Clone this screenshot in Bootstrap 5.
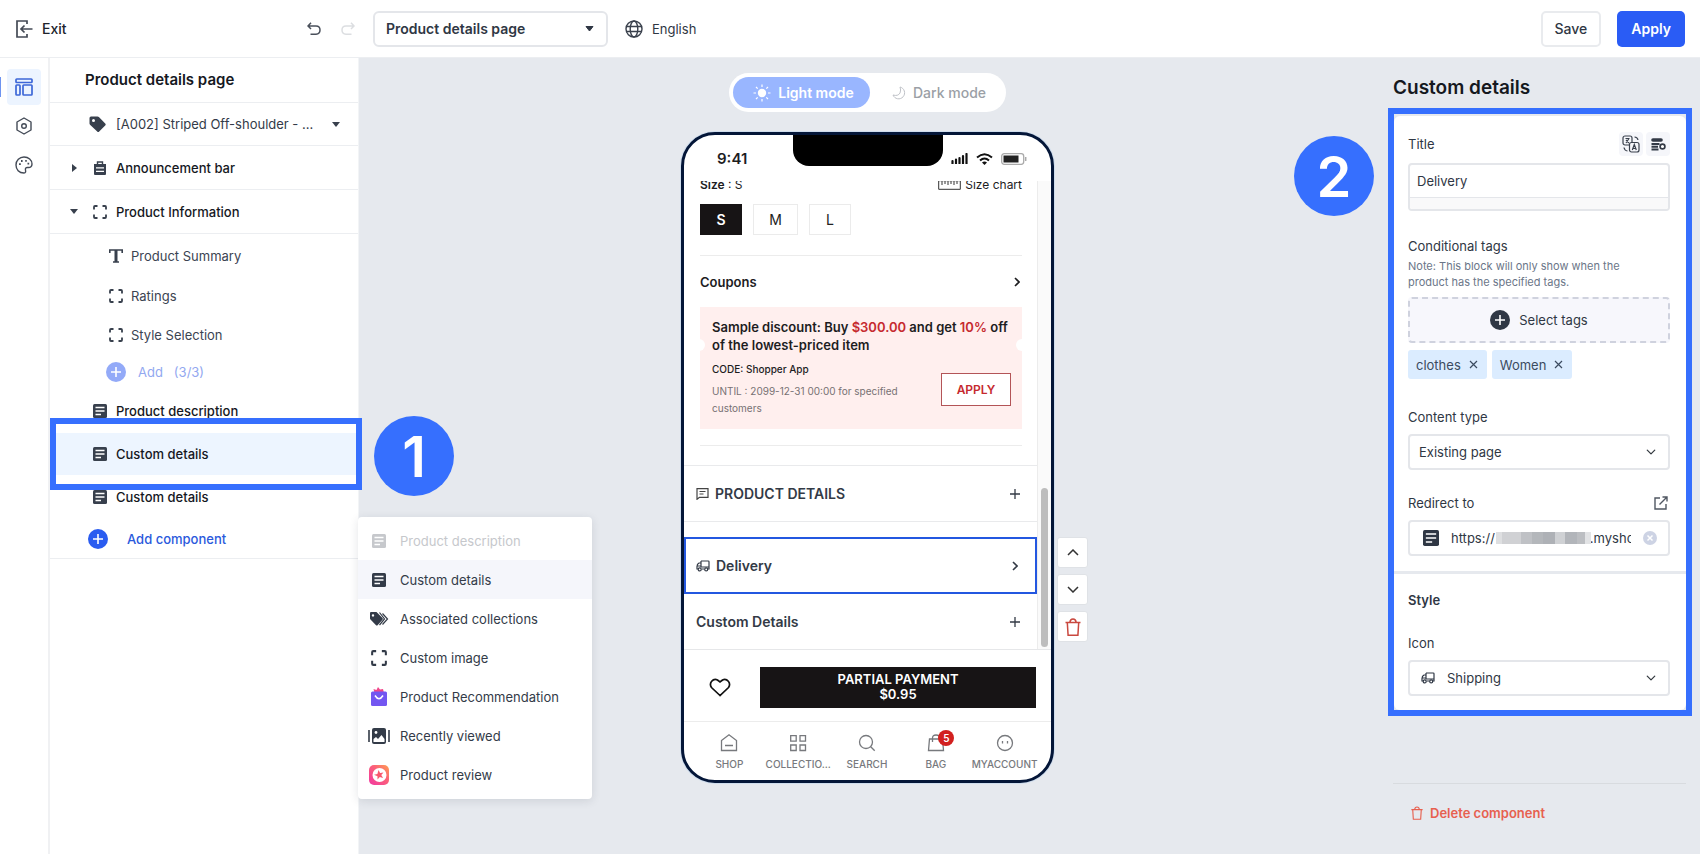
<!DOCTYPE html>
<html lang="en">
<head>
<meta charset="utf-8">
<meta name="viewport" content="width=device-width, initial-scale=1">
<title>Product details page</title>
<link href="https://cdn.jsdelivr.net/npm/bootstrap@5.3.0/dist/css/bootstrap.min.css" rel="stylesheet">
<style>
:root{--ink:#2f3744;--dark:#15181e;--line:#eceef1;--blue:#2a5cf5;--mark:#366ffe;--canvas:#e6e9ee}
body{font-family:Inter,"Liberation Sans",sans-serif;font-size:13px;line-height:18px;color:var(--ink);background:var(--canvas)}
button{font:inherit;color:inherit}
svg{display:block;flex:none}
.plain{background:none;border:0;padding:0;text-align:left}
.fw-medium{font-weight:500}
.fw-semi{font-weight:600}
/* top bar */
.topbar{height:58px;background:#fff;border-bottom:1px solid var(--line)}
.exit{gap:9px;width:291px;color:#20242c;font-size:14px}
.page-picker{width:235px;height:36px;margin-left:18px;border:2px solid #e4e6ea;border-radius:6px;font-size:14px;font-weight:600;color:var(--ink);padding:0 11px;background-size:9px 6px;background-position:right 12px center;background-image:url("data:image/svg+xml,%3Csvg xmlns='http://www.w3.org/2000/svg' viewBox='0 0 9 6'%3E%3Cpath d='M1 .5h7L4.500 5z' fill='%232f3744' stroke='%232f3744' stroke-linejoin='round'/%3E%3C/svg%3E")}
.lang{gap:9px;margin-left:17px}
.top-actions{padding-right:15px}
.top-btn{height:36px;border-radius:5px;font-size:14px;line-height:18px;padding:0 12px}
.btn-save{background:#fff;border:2px solid #e9ebee;font-weight:500}
.btn-save,.btn-save:hover{color:var(--ink)}
.btn-apply{background:var(--blue);color:#fff;font-weight:600;border:0;padding:0 14px}
/* left side */
.rail{width:50px;background:#fff;border-right:2px solid #f0f1f3;padding-top:11px;gap:3px}
.rail-btn{width:34px;height:36px;border-radius:4px;display:flex;align-items:center;justify-content:center}
.rail-btn.on{background:#ecf4ff;color:#3d67d8}
.rail-cell{width:100%;padding-left:7px}
.rail-cell .tick-bar{position:absolute;left:0;top:8px;width:1px;height:20px;background:#6d93f0}
.tree{width:309px;background:#fff;border-right:1px solid #f2f4f6;color:var(--dark)}
.tree h2{height:45px;font-size:15px;padding-left:35px;border-bottom:1px solid var(--line)}
.tree-row{display:flex;align-items:center;width:100%;height:44px;gap:9px;padding-left:43px;position:relative}
.tree-row.lined{border-bottom:1px solid var(--line)}
.tree-row.item{height:43px;padding-left:39px;gap:10px}
.tree-row.item span{width:202px;color:#333b48}
.tree-row .twist{position:absolute;left:20px}
.tree-row svg{color:#38404d}
.tree-row.sub{padding-left:59px;gap:8px;color:#3b4452}
.tree-row.mid{height:36px}
.tree-row.tall{height:41px}
.tree-row.more{height:34px;padding-left:56px;gap:12px;color:#93a8f0}
.tree-row.more svg{color:#93aaf8}
.tree-row.picked{background:#edf5ff;height:42px}
.tree-row.adder{height:39px;padding-left:38px;gap:19px;color:#2a59dc}
.tree-row.adder svg{color:#2a5cf0}
.tree-end{border-bottom:1px solid var(--line)}
.mark-row{position:absolute;left:0;top:-15px;width:312px;height:72px;border:6px solid var(--mark);z-index:3}
.step-dot{width:80px;height:80px;border-radius:50%;background:var(--mark);color:#fff;font-size:56px;font-weight:600;line-height:82px;text-align:center;position:absolute;z-index:4}
.step-one{left:324px;top:-17px}
.step-two{right:326px;top:78px}
.comp-menu{position:absolute;left:308px;top:-2px;width:234px;background:#fff;border-radius:4px;box-shadow:0 2px 10px rgba(30,40,60,.12);padding:4px 0 5px;z-index:5;color:#333b48}
.comp-menu button{display:flex;align-items:center;gap:9px;height:39px;width:100%;padding-left:9px}
.comp-menu .pic{width:24px;display:flex;justify-content:center}
.comp-menu .hot{background:#f5f6fb}
.comp-menu button:disabled{color:#c6c8cc}
/* preview */
.mode-pill{height:39px;border-radius:20px;background:#fff;padding:4px;width:277px;margin-top:15px;font-size:14px;color:#9b9fa6}
.mode-pill button{border-radius:16px;gap:7px}
.mode-pill .on{background:#99b6ff;color:#fff;width:137px;padding-left:4px}
.mode-pill .off{padding-left:22px}
.phone{width:373px;margin-top:20px;border:3px solid #041638;border-radius:34px;background:#fff;box-shadow:0 0 0 1px #cfdded;color:#1d1d1f}
.phone-clip{border-radius:31px;overflow:hidden}
.statusbar{height:46px;padding:1px 24px 0 33px}
.clock{font-size:15px;font-weight:600;line-height:18px}
.notch{position:absolute;left:109px;top:0;width:150px;height:31px;background:#000;border-radius:0 0 16px 16px}
.scroller{overflow:hidden;border-bottom:1px solid #e6e7e9}
.track{width:14px;background:#fafafa;border-left:1px solid #ececec;padding:0 2px 2px 3px}
.thumb{width:7px;height:159px;border-radius:4px;background:#bdbdbd}
.pad{padding:0 15px 0 16px}
.size-line{margin-top:-5px;font-size:12px;line-height:18px}
.sizes{margin:10px 0 20px;gap:11px}
.size-box{width:42px;height:31px;background:#fff;border:1px solid #ebebeb;font-size:14px;color:#222;text-align:center}
.size-box.wide{width:45px}
.size-box.on{background:#171415;color:#fff;border-color:#171415;font-weight:600}
.rule{height:1px;background:#ececec}
.coupons{height:51px;font-weight:600;width:100%;padding-right:2px}
.coupon{background:#ffefee;height:122px;padding:11px 11px 0 12px;position:relative}
.coupon:before,.coupon:after{content:"";position:absolute;top:32px;width:12px;height:12px;border-radius:50%;background:#fff}
.coupon:before{left:-7px}.coupon:after{right:-6px}
.coupon h3{font-size:13px;line-height:18px;font-weight:600;margin:0;white-space:nowrap}
.red{color:#c62a2f}
.tiny{font-size:10px;line-height:17px;padding-top:7px}
.until{color:#777173;margin-top:5px}
.btn-coupon{width:70px;height:33px;margin-top:19px;border:1px solid #b35457;background:#fff;color:#c62a2f;font-size:12px;font-weight:600;text-align:center;flex:none}
.fold{display:flex;align-items:center;gap:6px;width:100%;font-size:14px;font-weight:600;color:#333a46;padding:0 17px 0 12px}
.fold.ruled{height:57px;border-top:1px solid #e9eaec;border-bottom:1px solid #e9eaec;margin-top:19px}
.fold.chosen{height:57px;border:2px solid #2357e0;padding:0 17px 0 10px;margin-top:15px}
.fold.last{height:55px}
.buybar{height:72px;border-bottom:1px solid #ececec;padding:3px 15px 0 25px}
.buy{width:276px;height:41px;background:#171415;color:#fff;font-weight:600;line-height:15px;text-align:center}
.tabs{padding:11px 12px 0 11px;height:58px}
.tabs a{width:69px;color:#77797d;font-size:10px;line-height:14px;text-decoration:none;display:flex;flex-direction:column;align-items:center;gap:4px;position:relative;font-weight:500;white-space:nowrap}
.count{position:absolute;left:37px;top:-3px;width:16px;height:16px;border-radius:50%;background:#d2201f;color:#fff;font-size:10px;line-height:16px;text-align:center;font-weight:600}
.side-tools{position:absolute;left:373px;top:402px;display:flex;flex-direction:column;gap:6px}
.side-tools button{width:31px;height:31px;background:#fff;border:1px solid #dfe2e6;border-radius:3px;display:flex;align-items:center;justify-content:center}
.bin{color:#c9483f}
/* inspector */
.inspector{width:324px;padding:0 8px 0 12px}
.inspector h1{font-size:19px;line-height:24px;font-weight:600;margin:18px 5px 8px;color:var(--dark)}
.boxed{border:6px solid var(--mark);background:var(--canvas);padding-top:2px}
.sheet{background:#fff;padding:0 16px 0 14px}
.sheet.top{border-radius:6px 6px 0 0;height:455px;padding-top:15px}
.sheet.bottom{margin-top:3px;border-radius:0 0 6px 6px;height:136px;padding-top:17px}
.field{border:2px solid #e4e6ea;border-radius:4px;height:36px;background-color:#fff;font-size:13px;line-height:18px;color:var(--ink)}
.sheet .form-select{padding:0 34px 0 9px;background-size:12px 10px;background-position:right 11px center}
.sheet input{border:0;background:none;font-size:13px;color:var(--ink);padding:0;min-width:0}
.gap-3px{gap:3px}
.mini{width:24px;height:24px;border-radius:4px;background:#f5f6fa;display:flex;align-items:center;justify-content:center}
.title-field{height:48px;overflow:hidden;margin:6px 0 26px}
.title-field input{height:32px;padding-left:7px;display:block;width:100%}
.strip{height:13px;background:#f9f9fa;border-top:1px solid #e4e6ea}
.note{font-size:11px;line-height:16px;color:#6b7688;margin:3px 0 7px;padding-right:32px}
.drop-tags{height:46px;border:2px dashed #cfd2de;border-radius:4px;background:#f7f7fc;width:100%;gap:9px}
.chips{margin-top:7px;gap:5px}
.chip{height:29px;background:#dbecff;border-radius:3px;padding:0 9px 0 8px;gap:8px;color:#3b4b60}
.lbl{margin:29px 0 8px}
.lbl-row{margin:24px 2px 8px 0}
.lbl-icon{margin:25px 0 8px}
.url-field{padding:0 11px 0 13px}
.url-field input{width:180px;margin-left:12px}
.mosaic{position:absolute;left:86px;top:10px;width:95px;height:12px;background:linear-gradient(90deg,#dedfe1 0 6%,#d0d1d4 6% 26%,#bfc1c5 26% 38%,#b4b7bb 38% 50%,#aeb1b6 50% 62%,#cfd1d4 62% 73%,#b2b5ba 73% 85%,#bcbec2 85% 94%,#e2e3e5 94%)}
.ship{position:absolute;left:13px;top:12px}
.sheet .with-icon{padding-left:37px}
.delete{border-top:1px solid #d8dbdf;margin:67px 6px 0 5px;padding:20px 0 0 18px}
.delete button{color:#e7604f;font-weight:600;gap:7px}
</style>
</head>
<body>
<svg width="0" height="0" class="position-absolute" aria-hidden="true">
  <symbol id="i-doc" viewBox="0 0 14 14"><rect width="14" height="14" rx="1.500" fill="currentColor"/><path d="M2.500 3.500h9M2.500 7h9M2.500 10.500h5.500" stroke="#fff" stroke-width="1.300"/></symbol>
  <symbol id="i-frame" viewBox="0 0 14 14"><path d="M1 4.500V2q0-1 1-1h2.500M9.500 1H12q1 0 1 1v2.500M13 9.500V12q0 1-1 1H9.500M4.500 13H2q-1 0-1-1V9.500" fill="none" stroke="currentColor" stroke-width="1.800"/></symbol>
  <symbol id="i-plus-dot" viewBox="0 0 20 20"><circle cx="10" cy="10" r="10" fill="currentColor"/><path d="M10 5v10M5 10h10" stroke="#fff" stroke-width="1.600"/></symbol>
  <symbol id="i-tag" viewBox="0 0 17 17"><path fill="currentColor" fill-rule="evenodd" d="M2 .5h6.500q.8 0 1.400.6l6.300 6.500q1 1 0 2l-6 6q-1 1-2 0L1.300 9Q.5 8.300.5 7.500V2Q.5.500 2 .5zM4.500 2.900a1.500 1.500 0 1 0 0 3 1.500 1.500 0 0 0 0-3z"/></symbol>
  <symbol id="i-truck" viewBox="0 0 14 12"><path d="M5 1h7.200q.8 0 .8.8v7.200h-1M8.500 9H5.500M5 1v6h8M5 3H3Q1 4 1 6.500V9h1M1 6h4" fill="none" stroke="currentColor" stroke-width="1.200"/><circle cx="3.700" cy="9.400" r="1.500" fill="#fff" stroke="currentColor" stroke-width="1.200"/><circle cx="10.200" cy="9.400" r="1.500" fill="#fff" stroke="currentColor" stroke-width="1.200"/></symbol>
  <symbol id="i-plus" viewBox="0 0 10 10"><path d="M5 0v10M0 5h10" stroke="currentColor" stroke-width="1.300"/></symbol>
  <symbol id="i-right" viewBox="0 0 6 10"><path d="M1 1l4 4-4 4" fill="none" stroke="currentColor" stroke-width="1.600"/></symbol>
  <symbol id="i-bin" viewBox="0 0 16 18"><path d="M.5 4.500h15M2.300 4.500l.8 12.800h9.800l.8-12.800M4.800 4.500Q5.300 1 8 1t3.200 3.500" fill="none" stroke="currentColor" stroke-width="1.500"/></symbol>
  <symbol id="i-x" viewBox="0 0 9 9"><path d="M1 1l7 7M8 1L1 8" stroke="currentColor" stroke-width="1.200"/></symbol>
</svg>

<div class="d-flex flex-column min-vh-100">
  <header class="topbar d-flex align-items-center">
    <button class="plain exit d-flex align-items-center fw-medium ms-3">
      <svg width="17" height="18" viewBox="0 0 17 18" fill="none" stroke="#444a55" stroke-width="1.700"><path d="M11 4V1H1v16h10v-3M16.500 9H5M8.500 5.500L5 9l3.500 3.500"/></svg>
      <span>Exit</span>
    </button>
    <button class="plain" aria-label="Undo"><svg width="14" height="14" viewBox="0 0 14 14" fill="none" stroke="#4a505b" stroke-width="1.500"><path d="M1 4h8q4 0 4 4t-4 4.300H3.500M4 .8L1 4l3 3"/></svg></button>
    <button class="plain ms-3 ps-1" aria-label="Redo" disabled><svg width="14" height="14" viewBox="0 0 14 14" fill="none" stroke="#dcdee1" stroke-width="1.500"><path d="M13 4H5Q1 4 1 8t4 4.300h5.500M10 .8L13 4l-3 3"/></svg></button>
    <select class="form-select page-picker" aria-label="Page"><option>Product details page</option></select>
    <button class="plain lang d-flex align-items-center">
      <svg width="18" height="18" viewBox="0 0 18 18" fill="none" stroke="#3a414d" stroke-width="1.400"><circle cx="9" cy="9" r="8"/><ellipse cx="9" cy="9" rx="3.800" ry="8"/><path d="M1.500 6.500h15M1.500 11.500h15"/></svg>
      <span>English</span>
    </button>
    <div class="top-actions ms-auto d-flex gap-3">
      <button class="btn top-btn btn-save">Save</button>
      <button class="btn top-btn btn-apply">Apply</button>
    </div>
  </header>

  <div class="d-flex flex-grow-1">
    <nav class="rail flex-shrink-0 d-flex flex-column">
      <div class="rail-cell position-relative"><span class="tick-bar"></span>
        <button class="plain rail-btn on" aria-label="Layout"><svg width="18" height="18" viewBox="0 0 18 18" fill="none" stroke="currentColor" stroke-width="1.700"><rect x="1" y="1" width="16" height="3.500" rx=".8"/><rect x="1" y="7" width="4" height="10" rx=".8"/><rect x="8" y="7" width="9" height="10" rx=".8"/></svg></button></div>
      <div class="rail-cell"><button class="plain rail-btn" aria-label="Settings"><svg width="18" height="18" viewBox="0 0 18 18" fill="none" stroke="#444b57" stroke-width="1.400"><path d="M9 1l7 4v8l-7 4-7-4V5z" stroke-linejoin="round"/><circle cx="9" cy="9" r="2.300"/></svg></button></div>
      <div class="rail-cell"><button class="plain rail-btn" aria-label="Theme"><svg width="18" height="18" viewBox="0 0 18 18" fill="none" stroke="#444b57" stroke-width="1.400"><path d="M9 17C4 17 1 13.500 1 9s3.500-8 8-8 8 3 8 7c0 2.500-1.500 3.800-4 3.500-2-.3-3 .5-2.500 2.500.3 1.700.3 3-1.500 3z"/><path d="M4 8.200h1.800M6 5h1.600M10.200 4.800h1.600M12.500 7.600h1.700" stroke-width="1.800"/></svg></button></div>
    </nav>

    <aside class="tree flex-shrink-0">
      <h2 class="mb-0 fw-semi d-flex align-items-center">Product details page</h2>
      <button class="plain tree-row lined item">
        <svg width="17" height="17"><use href="#i-tag"/></svg>
        <span>[A002] Striped Off-shoulder - ...</span>
        <svg width="8" height="5" viewBox="0 0 8 5" class="ms-1"><path d="M0 0h8L4 5z" fill="currentColor"/></svg>
      </button>
      <button class="plain tree-row lined fw-medium">
        <svg class="twist" width="8" height="8" viewBox="0 0 8 8"><path d="M2 0v8l5-4z" fill="currentColor"/></svg>
        <svg width="14" height="14" viewBox="0 0 14 14"><path d="M1 3h12v10q0 1-1 1H2q-1 0-1-1z" fill="currentColor"/><path d="M4.500 3V1h5v2" fill="none" stroke="currentColor" stroke-width="1.400"/><path d="M3 6.800h8M3 10.300h8" stroke="#fff" stroke-width="1.300"/></svg>
        Announcement bar
      </button>
      <button class="plain tree-row lined fw-medium">
        <svg class="twist" width="8" height="5" viewBox="0 0 8 5"><path d="M0 0h8L4 5z" fill="currentColor"/></svg>
        <svg width="14" height="14"><use href="#i-frame"/></svg>Product Information
      </button>
      <button class="plain tree-row sub"><svg width="14" height="14" viewBox="0 0 14 14"><path d="M.8 4V1h12.400v3M4 13h6" fill="none" stroke="currentColor" stroke-width="1.600"/><path d="M5.500 1h3v12h-3z" fill="currentColor"/></svg>Product Summary</button>
      <button class="plain tree-row sub mid"><svg width="14" height="14"><use href="#i-frame"/></svg>Ratings</button>
      <button class="plain tree-row sub tall"><svg width="14" height="14"><use href="#i-frame"/></svg>Style Selection</button>
      <button class="plain tree-row more" disabled><svg width="20" height="20"><use href="#i-plus-dot"/></svg>Add &nbsp; (3/3)</button>
      <button class="plain tree-row fw-medium"><svg width="14" height="14"><use href="#i-doc"/></svg>Product description</button>
      <div class="position-relative">
        <button class="plain tree-row picked fw-medium"><svg width="14" height="14"><use href="#i-doc"/></svg>Custom details</button>
        <span class="mark-row"></span>
        <span class="step-dot step-one">1</span>
      </div>
      <button class="plain tree-row fw-medium"><svg width="14" height="14"><use href="#i-doc"/></svg>Custom details</button>
      <div class="position-relative tree-end">
        <button class="plain tree-row adder fw-medium"><svg width="20" height="20"><use href="#i-plus-dot"/></svg>Add component</button>
        <div class="comp-menu">
          <button class="plain" disabled><span class="pic"><svg width="14" height="14"><use href="#i-doc"/></svg></span>Product description</button>
          <button class="plain hot"><span class="pic"><svg width="14" height="14"><use href="#i-doc"/></svg></span>Custom details</button>
          <button class="plain"><span class="pic"><svg width="20" height="16" viewBox="0 0 20 16"><path fill="currentColor" fill-rule="evenodd" d="M2 1h5.500l6 6q.9.900 0 1.800L8.800 14q-1 1-2 0L1.500 8.500Q1 8 1 7.300V2q0-1 1-1zM4 3.200a1.200 1.200 0 1 0 0 2.400 1.200 1.200 0 0 0 0-2.400z"/><path d="M10.500 1.500l5 6.500-5 6M13.500 2.500l5 5.500-5 5.500" fill="none" stroke="currentColor" stroke-width="1.200"/></svg></span>Associated collections</button>
          <button class="plain"><span class="pic"><svg width="16" height="16"><use href="#i-frame"/></svg></span>Custom image</button>
          <button class="plain"><span class="pic"><svg width="16" height="20" viewBox="0 0 16 20"><path d="M3.500 6L2.500 2l3 1 1.500-3 2 2.500 3-.5 1 4z" fill="#f0468a"/><rect y="4.500" width="16" height="14.500" rx="1.500" fill="#7356f1"/><path d="M4 8.500q4 6.500 8 0" fill="none" stroke="#fff" stroke-width="1.500"/></svg></span>Product Recommendation</button>
          <button class="plain"><span class="pic"><svg width="22" height="16" viewBox="0 0 22 16"><path d="M1 2v12M21 2v12" stroke="currentColor" stroke-width="1.600"/><rect x="4" width="14" height="16" rx="2" fill="currentColor"/><circle cx="8" cy="4.500" r="1.400" fill="#fff"/><path d="M5.500 14v-3L8 9l2 2 3.500-4 3 4v3z" fill="#fff"/></svg></span>Recently viewed</button>
          <button class="plain"><span class="pic"><svg width="20" height="20" viewBox="0 0 20 20"><defs><linearGradient id="g" x1="0" y1="1" x2="1" y2="0"><stop stop-color="#f237a2"/><stop offset=".6" stop-color="#fb6277"/><stop offset="1" stop-color="#ffa152"/></linearGradient></defs><rect width="20" height="20" rx="5" fill="url(#g)"/><circle cx="10.500" cy="10" r="7" fill="#fff"/><path d="M9.500 5l1.600 3 3.400-.6-2.200 2.700 1.800 3-3.300-1-2.300 2.500v-3.300L5 9.800l3.400-.9z" fill="#f8586e"/></svg></span>Product review</button>
        </div>
      </div>
    </aside>

    <main class="flex-grow-1 d-flex flex-column align-items-center">
      <div class="mode-pill d-flex">
        <button class="plain on fw-semi d-flex align-items-center justify-content-center"><svg width="18" height="18" viewBox="0 0 18 18"><circle cx="9" cy="9" r="4.200" fill="#fff"/><path d="M9 .5V3M9 15v2.500M.5 9H3M15 9h2.500M3 3l1.700 1.700M13.300 13.300L15 15M3 15l1.700-1.700M13.300 4.700L15 3" stroke="#fff" stroke-width="1.200"/></svg>Light mode</button>
        <button class="plain off fw-medium d-flex align-items-center"><svg width="14" height="14" viewBox="0 0 14 14"><path d="M8 1a6 6 0 1 1-7 8q5 1.500 7-2 1.300-3 0-6z" fill="none" stroke="#bfc2c8"/></svg>Dark mode</button>
      </div>

      <div class="phone position-relative">
        <div class="phone-clip">
          <div class="statusbar d-flex align-items-center justify-content-between">
            <span class="clock">9:41</span>
            <span class="d-flex align-items-center gap-2">
              <svg width="17" height="11" viewBox="0 0 17 11"><path d="M1.500 10.500V8M5 10.500V6.500M8.500 10.500V5M12 10.500V3M15.500 10.500V1" stroke="#111" stroke-width="2.200" stroke-linecap="round"/></svg>
              <svg width="17" height="12" viewBox="0 0 17 12"><path d="M1 4.500q7.500-6.500 15 0M4 7.500q4.500-4 9 0" fill="none" stroke="#111" stroke-width="2"/><path d="M8.500 12L6 9.500q2.500-2 5 0z" fill="#111"/></svg>
              <svg width="26" height="12" viewBox="0 0 26 12"><rect x=".7" y=".7" width="22" height="10.600" rx="2.500" fill="none" stroke="#aaa" stroke-width="1.300"/><rect x="2.500" y="2.500" width="15" height="7" fill="#222"/><path d="M24.700 4v4" stroke="#aaa" stroke-width="1.500"/></svg>
            </span>
          </div>
          <div class="notch"></div>
          <div class="scroller d-flex">
            <div class="flex-grow-1">
              <div class="pad">
                <div class="size-line d-flex justify-content-between"><span><b class="fw-semi">Size</b> : S</span>
                  <span class="d-flex align-items-center gap-1"><svg width="23" height="10" viewBox="0 0 23 10"><path d="M.7.700h21.600v8.600H.7zM4 1v4M7 1v3M10 1v4M13 1v3M16 1v4M19 1v3" fill="none" stroke="#333"/></svg>Size chart</span></div>
                <div class="sizes d-flex">
                  <button class="plain size-box on">S</button>
                  <button class="plain size-box wide">M</button>
                  <button class="plain size-box">L</button>
                </div>
                <div class="rule"></div>
                <button class="plain coupons d-flex align-items-center justify-content-between">Coupons<svg width="6" height="10"><use href="#i-right"/></svg></button>
                <section class="coupon">
                  <h3>Sample discount: Buy <span class="red">$300.00</span> and get <span class="red">10%</span> off<br>of the lowest-priced item</h3>
                  <div class="d-flex justify-content-between">
                    <div class="tiny">
                      <div class="fw-medium">CODE: Shopper App</div>
                      <div class="until">UNTIL : 2099-12-31 00:00 for specified<br>customers</div>
                    </div>
                    <button class="plain btn-coupon">APPLY</button>
                  </div>
                </section>
                <div class="rule mt-3"></div>
              </div>
              <button class="plain fold ruled"><svg width="13" height="12" viewBox="0 0 13 12"><path d="M1 .7h11v8.600H3.500L1 11.300zM3.500 3.500h6M3.500 6h4" fill="none" stroke="#444" stroke-width="1.200"/></svg>PRODUCT DETAILS<svg width="10" height="10" class="ms-auto"><use href="#i-plus"/></svg></button>
              <button class="plain fold chosen"><svg width="14" height="12"><use href="#i-truck"/></svg>Delivery<svg width="6" height="10" class="ms-auto"><use href="#i-right"/></svg></button>
              <button class="plain fold last">Custom Details<svg width="10" height="10" class="ms-auto"><use href="#i-plus"/></svg></button>
            </div>
            <div class="track d-flex align-items-end"><div class="thumb"></div></div>
          </div>
          <div class="buybar d-flex align-items-center justify-content-between">
            <button class="plain" aria-label="Favourite"><svg width="22" height="19" viewBox="0 0 22 19"><path d="M11 17.500L2.500 9.500C-.5 5 4 0 8.500 2L11 4l2.500-2C18 0 22.500 5 19.500 9.500z" fill="none" stroke="#111" stroke-width="1.700"/></svg></button>
            <button class="plain buy">PARTIAL PAYMENT<br>$0.95</button>
          </div>
          <nav class="tabs d-flex">
            <a href="#"><svg width="20" height="20" viewBox="0 0 20 20" fill="none" stroke="currentColor" stroke-width="1.300"><path d="M2.500 7.500L10 1.800l7.500 5.700v10h-15zM6 12.500h8"/></svg>SHOP</a>
            <a href="#"><svg width="20" height="20" viewBox="0 0 20 20" fill="none" stroke="currentColor" stroke-width="1.300"><path d="M2.700 2.700h5.500v5.500H2.700zM12 2.700h5.500v5.500H12zM2.700 12h5.500v5.500H2.700zM12 12h5.500v5.500H12z"/></svg>COLLECTIO...</a>
            <a href="#"><svg width="20" height="20" viewBox="0 0 20 20" fill="none" stroke="currentColor" stroke-width="1.300"><circle cx="9" cy="9" r="6.500"/><path d="M13.700 13.700l4 4"/></svg>SEARCH</a>
            <a href="#"><svg width="20" height="20" viewBox="0 0 20 20" fill="none" stroke="currentColor" stroke-width="1.300"><path d="M3.500 6h13l1 11.500h-15zM6.500 9V5q0-3 3.500-3t3.500 3v4"/></svg>BAG<span class="count">5</span></a>
            <a href="#"><svg width="20" height="20" viewBox="0 0 20 20" fill="none" stroke="currentColor" stroke-width="1.300"><circle cx="10" cy="10" r="7.500"/><path d="M7.500 8v2.500M12.500 8v2.500"/></svg>MYACCOUNT</a>
          </nav>
        </div>
        <div class="side-tools">
          <button class="plain" aria-label="Move up"><svg width="12" height="7" viewBox="0 0 12 7"><path d="M1 6l5-5 5 5" fill="none" stroke="#333" stroke-width="1.500"/></svg></button>
          <button class="plain" aria-label="Move down"><svg width="12" height="7" viewBox="0 0 12 7"><path d="M1 1l5 5 5-5" fill="none" stroke="#333" stroke-width="1.500"/></svg></button>
          <button class="plain bin" aria-label="Delete"><svg width="16" height="18"><use href="#i-bin"/></svg></button>
        </div>
      </div>
    </main>

    <aside class="inspector flex-shrink-0 position-relative">
      <span class="step-dot step-two">2</span>
      <h1>Custom details</h1>
      <div class="boxed">
        <div class="sheet top">
          <div class="d-flex align-items-center gap-3px">
            <label for="t" class="me-auto py-1">Title</label>
            <button class="plain mini" aria-label="Translate"><svg width="18" height="18" viewBox="0 0 18 18" fill="none" stroke="#3a414d" stroke-width="1.200"><rect x="1" y="1" width="9" height="9" rx="2"/><rect x="7.500" y="7.500" width="9.500" height="9.500" rx="2" fill="#f5f6fa"/><path d="M3.500 3.500h4M7 3.500L4 8M4 5l3 3M10.300 15l2-5.500 2 5.500M11 13.500h2.600M12.500 2q3 0 3.500 3M2 12.500q.5 3 3.500 3.500"/></svg></button>
            <button class="plain mini" aria-label="Metafields"><svg width="15" height="13" viewBox="0 0 15 13"><path d="M2 2h8" stroke="#333a46" stroke-width="3.600" stroke-linecap="round"/><path d="M.5 6h8M.5 8.700h6.500M.5 11.500h7" stroke="#333a46" stroke-width="2"/><circle cx="11.500" cy="8.500" r="2.400" fill="#fff" stroke="#333a46" stroke-width="1.700"/></svg></button>
          </div>
          <div class="field title-field"><input id="t" type="text" value="Delivery"><div class="strip"></div></div>
          <div>Conditional tags</div>
          <p class="note">Note: This block will only show when the product has the specified tags.</p>
          <button class="plain drop-tags d-flex align-items-center justify-content-center"><svg width="20" height="20"><use href="#i-plus-dot"/></svg>Select tags</button>
          <div class="chips d-flex">
            <span class="chip d-flex align-items-center">clothes<button class="plain" aria-label="Remove clothes"><svg width="9" height="9"><use href="#i-x"/></svg></button></span>
            <span class="chip d-flex align-items-center">Women<button class="plain" aria-label="Remove Women"><svg width="9" height="9"><use href="#i-x"/></svg></button></span>
          </div>
          <label for="ct" class="lbl d-block">Content type</label>
          <select id="ct" class="form-select field"><option>Existing page</option></select>
          <div class="lbl-row d-flex justify-content-between align-items-center"><label for="url">Redirect to</label>
            <a href="#" aria-label="Open page"><svg width="14" height="14" viewBox="0 0 14 14" fill="none" stroke="#505762" stroke-width="1.400"><path d="M6 2H1v11h11V8M5.500 8.500L12.500 1.500M8.500 1H13v4.500"/></svg></a></div>
          <div class="field url-field position-relative d-flex align-items-center">
            <svg width="16" height="16"><use href="#i-doc"/></svg>
            <input id="url" type="text" value="https://&nbsp;&nbsp;&nbsp;&nbsp;&nbsp;&nbsp;&nbsp;&nbsp;&nbsp;&nbsp;&nbsp;&nbsp;&nbsp;&nbsp;&nbsp;&nbsp;&nbsp;&nbsp;&nbsp;&nbsp;&nbsp;&nbsp;&nbsp;&nbsp;&nbsp;&nbsp;.mysho">
            <span class="mosaic"></span>
            <button class="plain ms-auto" aria-label="Clear"><svg width="14" height="14" viewBox="0 0 14 14"><circle cx="7" cy="7" r="7" fill="#cdd3e4"/><path d="M4.500 4.500l5 5M9.500 4.500l-5 5" stroke="#fff" stroke-width="1.500"/></svg></button>
          </div>
        </div>
        <div class="sheet bottom">
          <div class="fw-semi">Style</div>
          <label for="ic" class="lbl-icon d-block">Icon</label>
          <div class="position-relative"><select id="ic" class="form-select field with-icon"><option>Shipping</option></select><svg class="ship" width="14" height="12"><use href="#i-truck"/></svg></div>
        </div>
      </div>
      <div class="delete"><button class="plain d-flex align-items-center"><svg width="12" height="14"><use href="#i-bin"/></svg>Delete component</button></div>
    </aside>
  </div>
</div>
<script src="https://cdn.jsdelivr.net/npm/bootstrap@5.3.0/dist/js/bootstrap.bundle.min.js"></script>
</body>
</html>
